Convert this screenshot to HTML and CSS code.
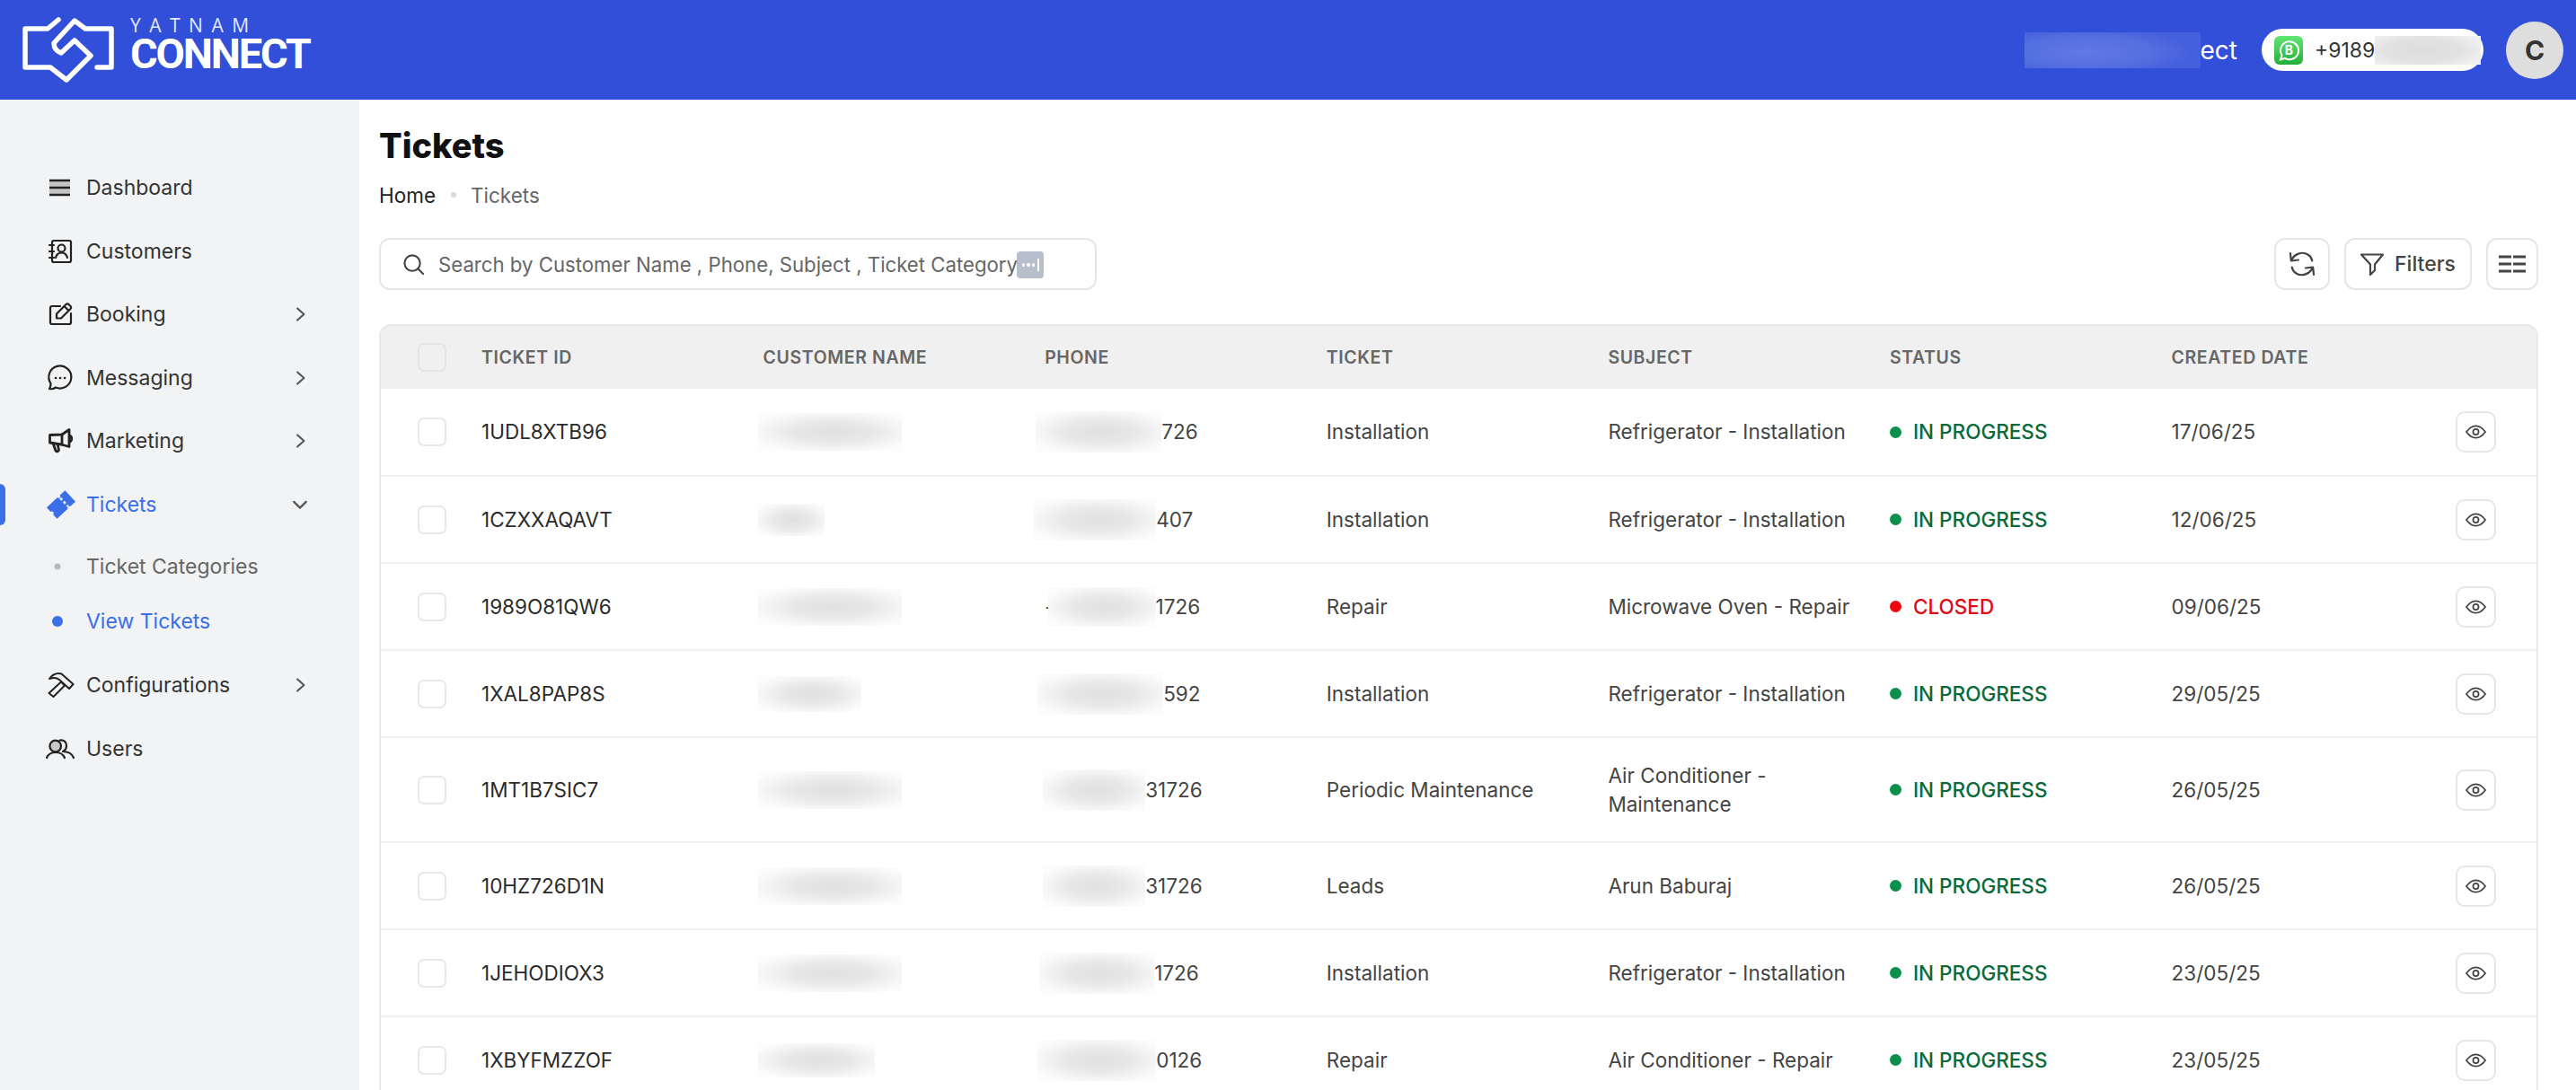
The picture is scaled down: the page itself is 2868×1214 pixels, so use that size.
FILE: index.html
```html
<!DOCTYPE html>
<html lang="en">
<head>
<meta charset="utf-8">
<title>Tickets</title>
<link rel="stylesheet" href="styles.css">
</head>
<body>
<header class="topbar">
  <div class="brand">
    <svg class="brand-mark" viewBox="0 0 130 95"><path d="M65 22 L53 32 L28 32 L28 75 L56 75 L74 89 L101 62 L83 45 L68 59 Q 60 56 60 48 L83 23 L95 32 L124 32 L124 75 L108 75"/></svg>
    <div class="brand-text"><span class="brand-top">YATNAM</span><span class="brand-main">CONNECT</span></div>
  </div>
  <div class="top-right">
    <div class="org"><span class="org-blur"></span><span>ect</span></div>
    <div class="wa-pill">
      <svg class="wa-icon" viewBox="0 0 32 32"><defs><linearGradient id="wg" x1="0" y1="0" x2="0" y2="1"><stop offset="0" stop-color="#62e676"/><stop offset="1" stop-color="#25ae38"/></linearGradient></defs><rect width="32" height="32" rx="6" fill="url(#wg)"/><path d="M7 26.500 8.600 21.500A10 10 0 1 1 12 24.800Z" fill="none" stroke="#fff" stroke-width="2"/><text x="16.500" y="20.500" class="wa-b">B</text></svg>
      <span class="wa-num">+9189</span><span class="wa-blur"></span>
    </div>
    <div class="avatar">C</div>
  </div>
</header>
<div class="shell">
  <aside class="sidebar">
    <nav class="nav">
      <a class="nav-item"><svg class="ico" viewBox="0 0 30 30"><rect class="bars-soft" x="2" y="7" width="23" height="16"/><path d="M2 7H25M2 15H25M2 23H25" class="bars"/></svg><span>Dashboard</span></a>
      <a class="nav-item"><svg class="ico" viewBox="0 0 30 30"><rect x="5" y="3" width="21" height="24" rx="2"/><circle cx="15.500" cy="11.500" r="4"/><path d="M9 22c1-4 4-5.500 6.500-5.500S21 18 22 22M2 8H7M2 15H7M2 22H7"/></svg><span>Customers</span></a>
      <a class="nav-item"><svg class="ico" viewBox="0 0 30 30"><path d="M14 6H5a2 2 0 0 0-2 2V24a2 2 0 0 0 2 2H24a2 2 0 0 0 2-2V14"/><path d="M10 14.500 20.500 4a2 2 0 0 1 3 0l2 2a2 2 0 0 1 0 3L15 19.500H10ZM18.500 6 23.500 11"/></svg><span>Booking</span><svg class="chev" viewBox="0 0 14 20"><path d="M2.500 2.500 11 10 2.500 17.500"/></svg></a>
      <a class="nav-item"><svg class="ico" viewBox="0 0 30 30"><path d="M2 27c2 .5 5 0 7-1.500A12.500 12.500 0 1 0 3.500 21c0 2.500-.5 4.500-1.500 6Z"/><path class="dots" d="M9 15h.1M14 15h.1M19 15h.1"/></svg><span>Messaging</span><svg class="chev" viewBox="0 0 14 20"><path d="M2.500 2.500 11 10 2.500 17.500"/></svg></a>
      <a class="nav-item"><svg class="ico" viewBox="0 0 30 30"><path d="M2.500 8.500 16 8 24 2.500V21.500L15 19 2.500 17Z" class="thick"/><path d="M16 8V19M6 17.500 9 26c1.500 1.500 3.500.5 3.500-1L11 18.500M24.500 9c3 1 3 6 0 7" class="thick"/></svg><span>Marketing</span><svg class="chev" viewBox="0 0 14 20"><path d="M2.500 2.500 11 10 2.500 17.500"/></svg></a>
      <a class="nav-item is-active"><svg class="ico ico-fill" viewBox="0 0 30 30"><g transform="rotate(-43 15 15)"><path d="M1 6.500H17.500a1.800 1.800 0 0 0 3.600 0H29V23.500H21.100a1.800 1.800 0 0 0-3.600 0H1V17a2 2 0 0 0 0-4Z"/><path class="ticket-cut" d="M19.300 9V21.500"/></g></svg><span>Tickets</span><svg class="chev chev-down" viewBox="0 0 20 14"><path d="M2.500 3 10 10.500 17.500 3"/></svg></a>
      <a class="nav-sub sub-first"><i class="sub-dot"></i><span>Ticket Categories</span></a>
      <a class="nav-sub is-active sub-last"><i class="sub-dot"></i><span>View Tickets</span></a>
      <a class="nav-item"><svg class="ico" viewBox="0 0 30 30"><path class="thin" d="M1.500 24 15 11.500 19 15.500 6.500 28ZM2 8C6 2.500 11.500 1.500 15.500 2.500L28.500 14 24 19 18 13.500 13 9C10 6.500 6 6.500 2 8Z"/></svg><span>Configurations</span><svg class="chev" viewBox="0 0 14 20"><path d="M2.500 2.500 11 10 2.500 17.500"/></svg></a>
      <a class="nav-item"><svg class="ico" viewBox="0 0 30 30"><circle class="head-fill" cx="8.700" cy="12" r="6.300"/><path d="M-1 25C1 20 5 19 9 19S17 20 19 25M13.500 5.500C18 4.500 21 7.500 21 11.500S19 17 17 18C22 18 27 20 29 25"/></svg><span>Users</span></a>
    </nav>
  </aside>
  <main class="main">
    <h1 class="title">Tickets</h1>
    <div class="crumbs"><span class="crumb-home">Home</span><i class="crumb-dot"></i><span class="crumb-cur">Tickets</span></div>
    <div class="toolbar">
      <div class="search">
        <svg class="search-ico" viewBox="0 0 26 26"><circle cx="11.500" cy="11.500" r="9"/><path d="M18 18 24 24"/></svg>
        <span class="search-text">Search by Customer Name , Phone, Subject , Ticket Category</span>
        <span class="search-badge"><i></i><i></i><i></i><b></b></span>
      </div>
      <div class="actions">
        <button class="tool"><svg class="tool-ico" viewBox="0 0 30 30"><path d="M2 3 2.800 11.500 11 10.500M3.200 11C6 4 15 .5 21.500 4.500c2.700 1.700 4.300 4.300 4.800 7M28 27 27.200 18.500 19 19.500M26.800 19C24 26 15 29.500 8.500 25.500c-2.700-1.700-4.300-4.300-4.800-7"/></svg></button>
        <button class="tool tool-text"><svg class="tool-ico" viewBox="0 0 26 26"><path d="M1 2.500H25L16 13.500V20L11 25V13.500Z"/></svg><span>Filters</span></button>
        <button class="tool tool-narrow"><svg class="tool-ico tool-cols" viewBox="0 0 30 22"><path d="M0 3H14M16 3H30M0 11H14M16 11H30M0 19H14M16 19H30"/></svg></button>
      </div>
    </div>
    <div class="table-wrap">
      <table class="grid">
        <colgroup><col class="c-check"><col class="c-data"><col class="c-data"><col class="c-data"><col class="c-data"><col class="c-data"><col class="c-data"><col class="c-data"><col class="c-act"></colgroup>
        <thead><tr><th><span class="check check-head"></span></th><th>Ticket ID</th><th>Customer Name</th><th>Phone</th><th>Ticket</th><th>Subject</th><th>Status</th><th>Created Date</th><th></th></tr></thead>
        <tbody>
          <tr><td><span class="check"></span></td><td class="tid">1UDL8XTB96</td><td><span class="blur b-name-l"></span></td><td><div class="phone"><span class="blur b-ph-a"></span>726</div></td><td>Installation</td><td>Refrigerator - Installation</td><td><span class="st ok">IN PROGRESS</span></td><td>17/06/25</td><td><button class="eye"><svg viewBox="0 0 24 16"><path d="M1 8C5 2.500 8.500 1 12 1s7 1.500 11 7c-4 5.500-7.500 7-11 7S5 13.500 1 8Z"/><circle cx="12" cy="8" r="3.200"/></svg></button></td></tr>
          <tr><td><span class="check"></span></td><td class="tid">1CZXXAQAVT</td><td><span class="blur b-name-s"></span></td><td><div class="phone"><span class="blur b-ph-b"></span>407</div></td><td>Installation</td><td>Refrigerator - Installation</td><td><span class="st ok">IN PROGRESS</span></td><td>12/06/25</td><td><button class="eye"><svg viewBox="0 0 24 16"><path d="M1 8C5 2.500 8.500 1 12 1s7 1.500 11 7c-4 5.500-7.500 7-11 7S5 13.500 1 8Z"/><circle cx="12" cy="8" r="3.200"/></svg></button></td></tr>
          <tr><td><span class="check"></span></td><td class="tid">1989O81QW6</td><td><span class="blur b-name-l"></span></td><td><div class="phone">-<span class="blur b-ph-c"></span>1726</div></td><td>Repair</td><td>Microwave Oven - Repair</td><td><span class="st bad">CLOSED</span></td><td>09/06/25</td><td><button class="eye"><svg viewBox="0 0 24 16"><path d="M1 8C5 2.500 8.500 1 12 1s7 1.500 11 7c-4 5.500-7.500 7-11 7S5 13.500 1 8Z"/><circle cx="12" cy="8" r="3.200"/></svg></button></td></tr>
          <tr><td><span class="check"></span></td><td class="tid">1XAL8PAP8S</td><td><span class="blur b-name-m"></span></td><td><div class="phone"><span class="blur b-ph-d"></span>592</div></td><td>Installation</td><td>Refrigerator - Installation</td><td><span class="st ok">IN PROGRESS</span></td><td>29/05/25</td><td><button class="eye"><svg viewBox="0 0 24 16"><path d="M1 8C5 2.500 8.500 1 12 1s7 1.500 11 7c-4 5.500-7.500 7-11 7S5 13.500 1 8Z"/><circle cx="12" cy="8" r="3.200"/></svg></button></td></tr>
          <tr class="tall"><td><span class="check"></span></td><td class="tid">1MT1B7SIC7</td><td><span class="blur b-name-l"></span></td><td><div class="phone"><span class="blur b-ph-e"></span>31726</div></td><td>Periodic Maintenance</td><td>Air Conditioner - Maintenance</td><td><span class="st ok">IN PROGRESS</span></td><td>26/05/25</td><td><button class="eye"><svg viewBox="0 0 24 16"><path d="M1 8C5 2.500 8.500 1 12 1s7 1.500 11 7c-4 5.500-7.500 7-11 7S5 13.500 1 8Z"/><circle cx="12" cy="8" r="3.200"/></svg></button></td></tr>
          <tr><td><span class="check"></span></td><td class="tid">10HZ726D1N</td><td><span class="blur b-name-l"></span></td><td><div class="phone"><span class="blur b-ph-e"></span>31726</div></td><td>Leads</td><td>Arun Baburaj</td><td><span class="st ok">IN PROGRESS</span></td><td>26/05/25</td><td><button class="eye"><svg viewBox="0 0 24 16"><path d="M1 8C5 2.500 8.500 1 12 1s7 1.500 11 7c-4 5.500-7.500 7-11 7S5 13.500 1 8Z"/><circle cx="12" cy="8" r="3.200"/></svg></button></td></tr>
          <tr><td><span class="check"></span></td><td class="tid">1JEHODIOX3</td><td><span class="blur b-name-l"></span></td><td><div class="phone"><span class="blur b-ph-a2"></span>1726</div></td><td>Installation</td><td>Refrigerator - Installation</td><td><span class="st ok">IN PROGRESS</span></td><td>23/05/25</td><td><button class="eye"><svg viewBox="0 0 24 16"><path d="M1 8C5 2.500 8.500 1 12 1s7 1.500 11 7c-4 5.500-7.500 7-11 7S5 13.500 1 8Z"/><circle cx="12" cy="8" r="3.200"/></svg></button></td></tr>
          <tr><td><span class="check"></span></td><td class="tid">1XBYFMZZOF</td><td><span class="blur b-name-n"></span></td><td><div class="phone"><span class="blur b-ph-d2"></span>0126</div></td><td>Repair</td><td>Air Conditioner - Repair</td><td><span class="st ok">IN PROGRESS</span></td><td>23/05/25</td><td><button class="eye"><svg viewBox="0 0 24 16"><path d="M1 8C5 2.500 8.500 1 12 1s7 1.500 11 7c-4 5.500-7.500 7-11 7S5 13.500 1 8Z"/><circle cx="12" cy="8" r="3.200"/></svg></button></td></tr>
        </tbody>
      </table>
    </div>
  </main>
</div>
</body>
</html>
```
FILE: styles.css
```css
* { box-sizing: border-box; }
html, body { margin: 0; height: 100%; overflow: hidden; }
body { font-family: Inter, "Liberation Sans", sans-serif; color: #2b2b2b; background: #fff; }

.topbar { height: 111px; background: #314fd8; display: flex; align-items: center; justify-content: space-between; color: #fff; }
.brand { display: flex; align-items: center; }
.brand-mark { width: 130px; height: 95px; margin-top: -16px; flex: none; }
.brand-mark path { fill: none; stroke: #fff; stroke-width: 5.500; stroke-linejoin: round; stroke-linecap: round; }
.brand-text { display: flex; flex-direction: column; margin-left: 15px; margin-top: -14px; }
.brand-top { font: 400 21px/22px "Open Sans", sans-serif; letter-spacing: 9.500px; color: #e4e9fb; }
.brand-main { font: 700 47px/42px Roboto, sans-serif; letter-spacing: -2.200px; }
.top-right { display: flex; align-items: center; }
.org { display: flex; align-items: center; font-size: 28px; width: 237px; }
.org-blur { width: 198px; height: 40px; background: radial-gradient(ellipse 60% 70% at 35% 55%, #6079e4 0, #566fe0 60%, #4460dc 100%); }
.wa-pill { margin-left: 27px; width: 247px; height: 47px; background: #fff; border-radius: 24px; display: flex; align-items: center; padding-left: 14px; color: #333; font-size: 23px; }
.wa-icon { width: 32px; height: 32px; flex: none; }
.wa-b { font: 700 14px Inter, sans-serif; fill: #fff; text-anchor: middle; }
.wa-num { margin-left: 13px; }
.wa-blur { width: 118px; height: 32px; background: radial-gradient(ellipse 60% 70% at 45% 50%, #dcdcdc 0, #e2e2e2 60%, #f0f0f0 100%); }
.avatar { margin: 0 14px 0 25px; width: 64px; height: 64px; border-radius: 50%; background: #dedede; color: #333; font-size: 30px; font-weight: 700; display: flex; align-items: center; justify-content: center; }

.shell { display: flex; height: 1103px; }
.sidebar { width: 400px; flex: none; background: #f1f3f5; padding-top: 63px; }
.nav { display: flex; flex-direction: column; }
.nav-item, .nav-sub { position: relative; height: 70.500px; display: flex; align-items: center; padding-left: 53px; font-size: 23px; color: #333; }
.nav-sub { height: 61px; color: #666; }
.sub-first { margin-top: 3px; }
.sub-last { margin-bottom: 6px; }
.ico { width: 30px; height: 30px; flex: none; fill: none; stroke: #222; stroke-width: 2.200; stroke-linejoin: round; stroke-linecap: round; overflow: visible; margin-right: 13px; }
.ico .bars { stroke-linecap: butt; stroke-width: 2.400; }
.ico .bars-soft { fill: #c4c4c4; stroke: none; }
.ico .dots { stroke-width: 2.600; }
.ico .thick { stroke-width: 2.800; }
.ico .thin { stroke-width: 2; }
.ico-fill { fill: #3b6fe8; stroke: none; }
.ico-fill .ticket-cut { stroke: #f1f3f5; stroke-width: 2.500; stroke-dasharray: 3 2.500; fill: none; stroke-linecap: butt; }
.head-fill { fill: #c9c9c9; }
.chev { position: absolute; left: 329px; top: 26px; width: 12px; height: 18px; fill: none; stroke: #555; stroke-width: 2.500; stroke-linecap: round; stroke-linejoin: round; }
.chev-down { left: 325px; top: 29px; width: 18px; height: 13px; }
.nav-item.is-active { color: #3b6fe8; }
.nav-item.is-active::before { content: ""; position: absolute; left: 0; top: 12px; width: 6px; height: 46px; background: #3b6fe8; border-radius: 0 6px 6px 0; }
.sub-dot { width: 12px; height: 12px; margin: 0 26px 0 5px; border-radius: 50%; background: #bbb; transform: scale(.6); flex: none; }
.nav-sub.is-active { color: #3b6fe8; }
.nav-sub.is-active .sub-dot { background: #3b6fe8; transform: none; }

.main { flex: 1; min-width: 0; padding: 21px 42px 0 22px; overflow: hidden; }
.title { margin: 0; font-size: 38px; line-height: 60px; font-weight: 800; color: #111; }
.crumbs { display: flex; align-items: center; height: 36px; margin-top: 7px; font-size: 22.500px; }
.crumb-home { color: #222; }
.crumb-dot { width: 6px; height: 6px; border-radius: 50%; background: #d8d8d8; margin: 0 16px 0 17px; }
.crumb-cur { color: #666; }
.toolbar { display: flex; align-items: center; justify-content: space-between; margin-top: 30px; height: 58px; }
.search { position: relative; width: 799px; height: 58px; border: 2px solid #e6e6e6; border-radius: 12px; display: flex; align-items: center; padding-left: 24px; color: #666; font-size: 22.200px; }
.search-ico { width: 25px; height: 25px; flex: none; fill: none; stroke: #444; stroke-width: 2.200; stroke-linecap: round; margin-right: 15px; }
.search-text { white-space: nowrap; }
.search-badge { position: absolute; left: 708px; top: 13px; width: 30px; height: 30px; background: #b8bfcc; border-radius: 4px; display: flex; align-items: center; justify-content: center; gap: 2px; }
.search-badge i { width: 3.500px; height: 3.500px; border-radius: 50%; background: #fff; }
.search-badge b { width: 1.500px; height: 14px; background: #fff; margin-left: 1px; }
.actions { display: flex; gap: 16px; }
.tool { height: 58px; width: 62px; padding: 0; background: #fff; border: 2px solid #e6e6e6; border-radius: 12px; display: flex; align-items: center; justify-content: center; color: #444; font: 500 23px Inter, sans-serif; }
.tool-text { width: 142px; gap: 12px; }
.tool-narrow { width: 58px; }
.tool-ico { width: 30px; height: 30px; fill: none; stroke: #444; stroke-width: 2.200; stroke-linecap: round; stroke-linejoin: round; }
.tool-text .tool-ico { width: 26px; height: 26px; }
.tool-cols { width: 30px; height: 22px; stroke-width: 3; stroke-linecap: butt; }

.table-wrap { margin-top: 38px; border: 2px solid #e8e8e8; border-bottom: 0; border-radius: 14px 14px 0 0; overflow: hidden; width: 2404px; }
.grid { width: 2400px; table-layout: fixed; border-collapse: collapse; font-size: 22.500px; color: #444; }
.c-check { width: 112px; }
.c-data { width: 313.600px; }
.grid th { height: 70px; background: #f0f0f0; text-align: left; font-size: 19.500px; font-weight: 600; color: #666; letter-spacing: .6px; text-transform: uppercase; padding: 0; }
.grid td { height: 97px; padding: 0 30px 0 0; border-bottom: 2px solid #efefef; line-height: 32px; }
.grid tr.tall td { height: 117px; }
.grid td:first-child, .grid th:first-child { padding-left: 41px; }
.grid td.tid { color: #2b2b2b; }
.check { display: block; width: 32px; height: 32px; border: 2px solid #e8e8e8; border-radius: 7px; background: #fff; }
.check-head { background: #f0f0f0; border-color: #e4e4e4; }
.blur { display: block; background: radial-gradient(ellipse 62% 60% at 52% 50%, #e0e0e0 0, #e8e8e8 45%, #f5f5f5 78%, #fcfcfc 100%); margin-left: -6px; }
.b-name-l { width: 160px; height: 42px; }
.b-name-m { width: 115px; height: 40px; }
.b-name-s { width: 74px; height: 36px; }
.b-name-n { width: 130px; height: 38px; }
.phone { display: flex; align-items: center; height: 46px; }
.b-ph-a { width: 140px; height: 46px; margin-left: -10px; }
.b-ph-a2 { width: 128px; height: 46px; margin-left: -6px; }
.b-ph-b { width: 136px; height: 46px; margin-left: -12px; }
.b-ph-c { width: 120px; height: 44px; margin-left: -7px; }
.b-ph-d { width: 140px; height: 46px; margin-left: -8px; }
.b-ph-d2 { width: 132px; height: 46px; margin-left: -8px; }
.b-ph-e { width: 114px; height: 46px; margin-left: -2px; }
.st { display: flex; align-items: center; font-weight: 500; white-space: nowrap; }
.st::before { content: ""; width: 13px; height: 13px; border-radius: 50%; margin-right: 13px; flex: none; }
.ok { color: #0a6a3c; }
.ok::before { background: #0a8f4c; }
.bad { color: #dd0b14; }
.bad::before { background: #ee0510; }
.eye { display: flex; align-items: center; justify-content: center; width: 45px; height: 46px; margin-left: 3px; padding: 0; background: #fff; border: 2px solid #e6e6e6; border-radius: 10px; }
.eye svg { width: 23px; height: 16px; fill: none; stroke: #444; stroke-width: 1.800; }
```
